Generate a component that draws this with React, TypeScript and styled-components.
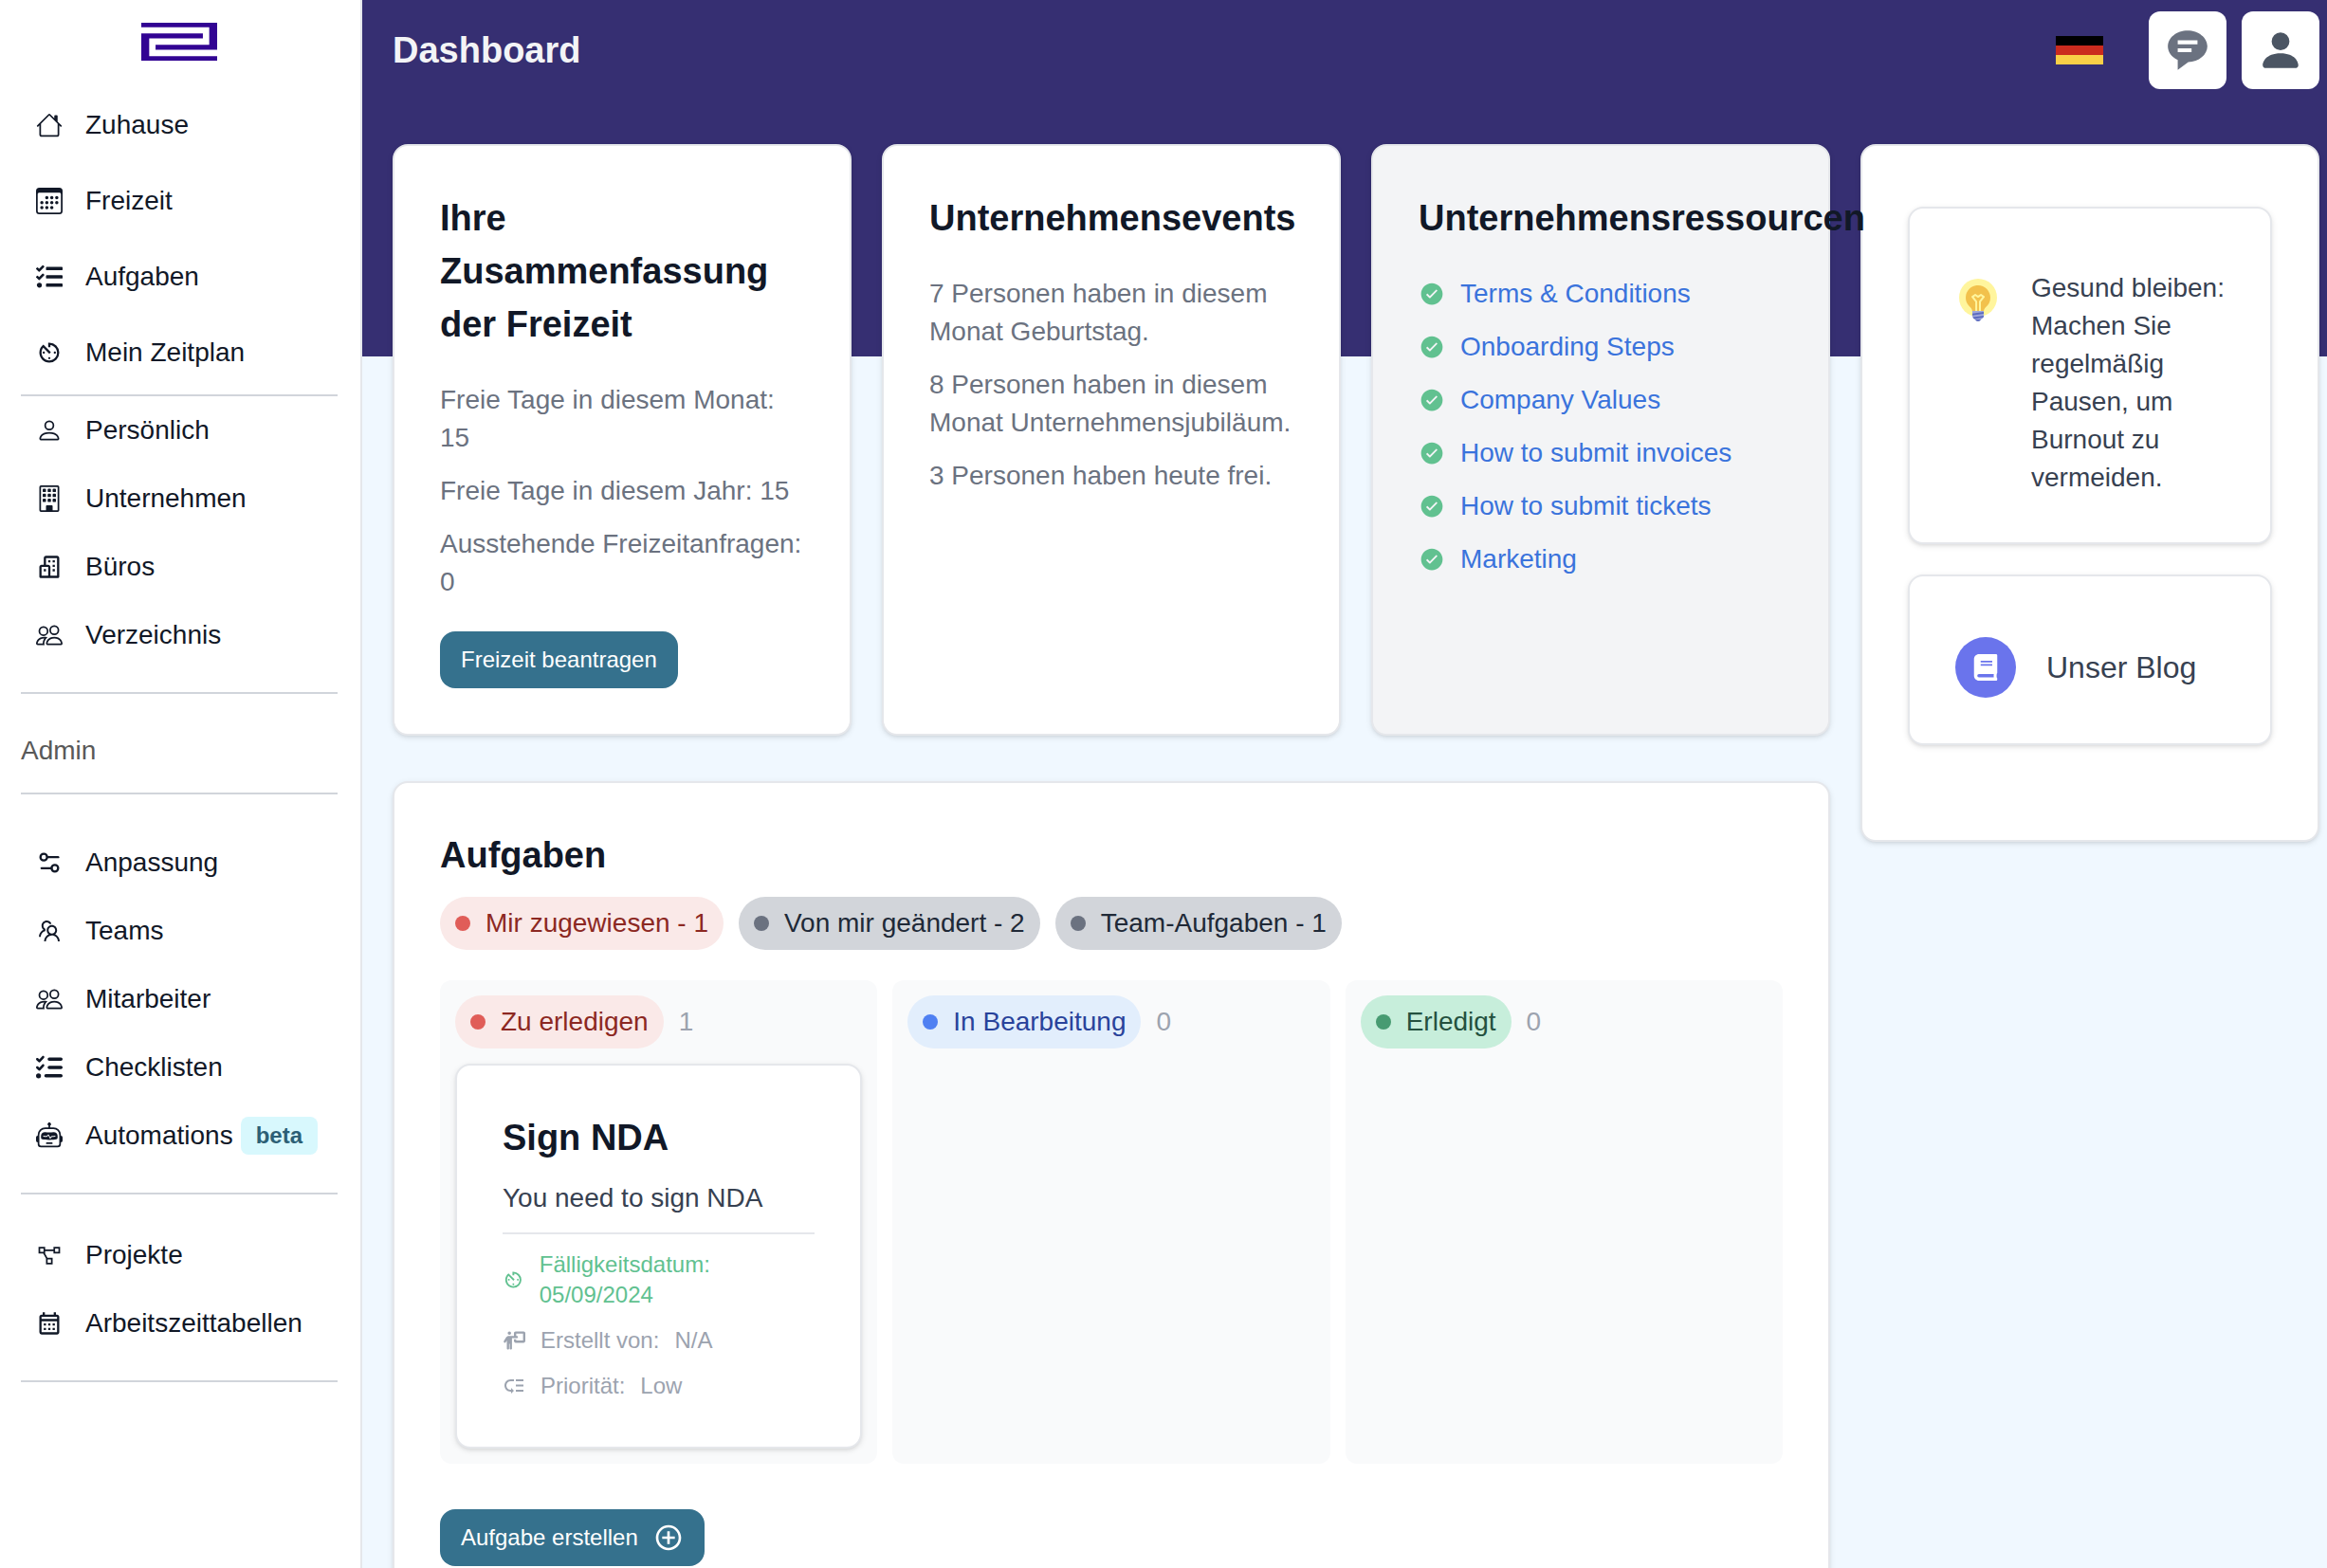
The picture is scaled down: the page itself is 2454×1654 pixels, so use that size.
import React from "react";
import styled, { createGlobalStyle } from "styled-components";
import {
  BsBuilding,
  BsCalendar3,
  BsHouse,
  BsPeople,
  BsPerson,
  BsPersonFill,
  BsRobot,
} from "react-icons/bs";
import { FaBook, FaTasks } from "react-icons/fa";
import { FaListCheck, FaPersonChalkboard } from "react-icons/fa6";
import {
  MdAddCircleOutline,
  MdAvTimer,
  MdLowPriority,
  MdOutlineCalendarMonth,
} from "react-icons/md";
import { BiBuildings } from "react-icons/bi";
import { LuSettings2 } from "react-icons/lu";
import { AiOutlineTeam } from "react-icons/ai";
import { LiaProjectDiagramSolid } from "react-icons/lia";
import { IoIosCheckmarkCircle } from "react-icons/io";
import { FcIdea } from "react-icons/fc";
import type { IconType } from "react-icons";

const color = {
  ink: "#111827",
  body: "#374151",
  muted: "#6b7280",
  faint: "#9ca3af",
  line: "#e5e7eb",
  rule: "#d1d5db",
  band: "#362f72",
  page: "#f0f8ff",
  teal: "#35718d",
  green: "#61c190",
  link: "#3a73dc",
};

const GlobalStyle = createGlobalStyle`
  *, *::before, *::after { box-sizing: border-box; }
  body {
    margin: 0;
    font-family: "Liberation Sans", Arial, Helvetica, sans-serif;
    font-size: 28px;
    line-height: 40px;
    color: ${color.ink};
  }
  h1, h2, h3, p, ul { margin: 0; padding: 0; }
  ul { list-style: none; }
  button { font: inherit; border: 0; cursor: pointer; }
  a { color: inherit; text-decoration: none; }
  svg { display: block; }
`;

/* ---------- Shell ---------- */

const Shell = styled.div`
  display: flex;
  height: 100vh;
`;

const Sidebar = styled.aside`
  flex: 0 0 382px;
  overflow-y: auto;
  scrollbar-width: none;
  padding: 24px 24px 24px 22px;
  background: #fff;
  border-right: 2px solid ${color.line};
`;

const LogoLink = styled.a`
  display: flex;
  justify-content: center;
  margin-bottom: 32px;
`;

const NavList = styled.ul<{ $gap?: number; $top?: number; $bottom?: number }>`
  display: flex;
  flex-direction: column;
  gap: ${(p) => p.$gap ?? 0}px;
  padding-top: ${(p) => p.$top ?? 0}px;
  padding-bottom: ${(p) => p.$bottom ?? 0}px;
  border-bottom: 2px solid ${color.rule};
`;

const NavLink = styled.a`
  display: flex;
  align-items: center;
  padding: 16px;
  white-space: nowrap;

  svg {
    flex: none;
    margin-right: 24px;
  }
`;

const BetaBadge = styled.span`
  margin-left: 8px;
  padding: 0 16px;
  border-radius: 8px;
  background: #d8f8fd;
  color: #2c5f75;
  font-size: 24px;
  font-weight: 700;
`;

const NavHeading = styled.h2`
  padding: 40px 0 24px;
  border-bottom: 2px solid ${color.rule};
  color: #595959;
  font-size: 28px;
  font-weight: 400;
  line-height: 40px;
`;

const Main = styled.main`
  flex: 1;
  min-width: 0;
  overflow-y: auto;
  scrollbar-width: none;
  padding: 12px 8px 48px 32px;
  background: linear-gradient(${color.band} 376px, ${color.page} 376px);
`;

const TopBar = styled.header`
  display: flex;
  align-items: center;
  gap: 16px;
  margin-bottom: 58px;
`;

const PageTitle = styled.h1`
  margin-right: auto;
  color: #f3f4f6;
  font-size: 38px;
  font-weight: 700;
  line-height: 56px;
`;

const LanguageButton = styled.button`
  margin-right: 32px;
  padding: 0;
  background: none;
`;

const IconButton = styled.button`
  display: grid;
  place-items: center;
  width: 82px;
  height: 82px;
  padding: 0;
  border-radius: 12px;
  background: #fff;
  color: ${color.muted};
`;

/* ---------- Dashboard grid ---------- */

const Dashboard = styled.div`
  display: grid;
  grid-template-columns: repeat(4, minmax(0, 1fr));
  align-items: start;
  gap: 32px;
`;

const Primary = styled.div`
  position: relative;
  z-index: 1;
  grid-column: span 3;
  display: grid;
  gap: 48px;
`;

const Summaries = styled.div`
  display: grid;
  grid-template-columns: repeat(3, minmax(0, 1fr));
  gap: 32px;
`;

const Card = styled.section<{ $tinted?: boolean }>`
  padding: 48px;
  border: 2px solid ${color.line};
  border-radius: 16px;
  background: ${(p) => (p.$tinted ? "#f3f4f6" : "#fff")};
  box-shadow: 0 2px 6px rgba(0, 0, 0, 0.1), 0 2px 4px -2px rgba(0, 0, 0, 0.1);
`;

const CardTitle = styled.h2`
  font-size: 38px;
  font-weight: 700;
  line-height: 56px;
`;

const CardBody = styled.div`
  display: grid;
  gap: 16px;
  margin: 32px 0;
  color: ${color.muted};

  &:last-child {
    margin-bottom: 0;
  }
`;

const PrimaryButton = styled.button`
  display: inline-flex;
  align-items: center;
  gap: 16px;
  height: 60px;
  padding: 0 22px;
  border-radius: 16px;
  background: ${color.teal};
  color: #fff;
  font-size: 24px;
  white-space: nowrap;
`;

const ResourceItem = styled.li`
  display: flex;
  align-items: center;
  gap: 16px;

  svg {
    flex: none;
    color: ${color.green};
  }

  a {
    color: ${color.link};
  }
`;

const ResourceList = styled.ul`
  display: grid;
  gap: 16px;
  margin-top: 32px;
`;

/* ---------- Tips column ---------- */

const TipStack = styled.div`
  display: grid;
  gap: 32px;
  padding: 16px 0 52px;
`;

const TipCard = styled(Card)`
  display: flex;
  align-items: flex-start;
  gap: 32px;
  padding-top: 64px;
  color: ${color.body};
`;

const TipIcon = styled.span`
  flex: none;
  padding-top: 8px;

  path[fill="#FBC02D"] {
    fill: #f2c14c;
  }
`;

const BlogLink = styled.a`
  display: flex;
  align-items: center;
  gap: 32px;
  font-size: 32px;
`;

const BlogIcon = styled.span`
  display: grid;
  place-items: center;
  width: 64px;
  height: 64px;
  border-radius: 50%;
  background: #6a74ec;
  color: #fff;
`;

/* ---------- Tasks ---------- */

type Tone = "red" | "gray" | "blue" | "green";

const tones: Record<Tone, { bg: string; fg: string; dot: string }> = {
  red: { bg: "#fae9e8", fg: "#8c2822", dot: "#e05d58" },
  gray: { bg: "#d2d5da", fg: "#202937", dot: "#6b7280" },
  blue: { bg: "#e2eefc", fg: "#29439b", dot: "#4f80f2" },
  green: { bg: "#c7eedb", fg: "#24513f", dot: "#489b72" },
};

const Pill = styled.span<{ $tone: Tone }>`
  display: inline-flex;
  align-items: center;
  gap: 16px;
  height: 56px;
  padding: 0 16px;
  border-radius: 28px;
  background: ${(p) => tones[p.$tone].bg};
  color: ${(p) => tones[p.$tone].fg};
  white-space: nowrap;

  &::before {
    content: "";
    width: 16px;
    height: 16px;
    border-radius: 50%;
    background: ${(p) => tones[p.$tone].dot};
  }
`;

const FilterRow = styled.div`
  display: flex;
  flex-wrap: wrap;
  gap: 16px;
  margin: 16px 0 32px;
`;

const Board = styled.div`
  display: grid;
  grid-template-columns: repeat(3, minmax(0, 1fr));
  gap: 16px;
  margin-bottom: 48px;
`;

const Column = styled.section`
  display: flex;
  flex-direction: column;
  gap: 16px;
  padding: 16px;
  border-radius: 12px;
  background: #f9fafb;
`;

const ColumnHead = styled.header`
  display: flex;
  align-items: center;
  gap: 16px;
  color: ${color.faint};
`;

const TaskText = styled.p`
  padding: 16px 0;
  border-bottom: 2px solid ${color.line};
  color: ${color.body};
`;

const TaskMeta = styled.ul`
  display: grid;
  gap: 16px;
  padding-top: 16px;
`;

const MetaRow = styled.li<{ $due?: boolean }>`
  display: flex;
  align-items: center;
  gap: 16px;
  color: ${(p) => (p.$due ? color.green : color.faint)};
  font-size: 24px;
  line-height: 32px;
`;

/* ---------- Drawings ---------- */

const Logo = () => (
  <svg width="80" height="40" viewBox="0 0 80 40" aria-label="Logo" role="img">
    <rect width="80" height="40" fill="#320493" />
    <path
      d="M0 8H68.3V19.8H11.7V31.8H80"
      fill="none"
      stroke="#fff"
      strokeWidth="6.7"
    />
  </svg>
);

const GermanFlag = () => (
  <svg width="50" height="30" viewBox="0 0 50 30" aria-hidden="true">
    <rect width="50" height="10" fill="#000" />
    <rect y="10" width="50" height="10" fill="#cb2b1e" />
    <rect y="20" width="50" height="10" fill="#f9cf47" />
  </svg>
);

const MessageIcon = () => (
  <svg
    width="50"
    height="50"
    viewBox="0 0 24 24"
    fill="currentColor"
    aria-hidden="true"
  >
    <path
      fillRule="evenodd"
      d="M12 2C6.486 2 2 5.589 2 10c0 2.908 1.898 5.515 5 6.934V22l5.34-4.005C17.697 17.852 22 14.32 22 10c0-4.411-4.486-8-10-8zM7 7h10v2H7V7zm0 4h7v2H7v-2z"
    />
  </svg>
);

/* ---------- Data ---------- */

type NavEntry = { icon: IconType; label: string; beta?: boolean };

const homeNav: NavEntry[] = [
  { icon: BsHouse, label: "Zuhause" },
  { icon: BsCalendar3, label: "Freizeit" },
  { icon: FaTasks, label: "Aufgaben" },
  { icon: MdAvTimer, label: "Mein Zeitplan" },
];

const companyNav: NavEntry[] = [
  { icon: BsPerson, label: "Persönlich" },
  { icon: BsBuilding, label: "Unternehmen" },
  { icon: BiBuildings, label: "Büros" },
  { icon: BsPeople, label: "Verzeichnis" },
];

const adminNav: NavEntry[] = [
  { icon: LuSettings2, label: "Anpassung" },
  { icon: AiOutlineTeam, label: "Teams" },
  { icon: BsPeople, label: "Mitarbeiter" },
  { icon: FaListCheck, label: "Checklisten" },
  { icon: BsRobot, label: "Automations", beta: true },
];

const projectNav: NavEntry[] = [
  { icon: LiaProjectDiagramSolid, label: "Projekte" },
  { icon: MdOutlineCalendarMonth, label: "Arbeitszeittabellen" },
];

const resources = [
  "Terms & Conditions",
  "Onboarding Steps",
  "Company Values",
  "How to submit invoices",
  "How to submit tickets",
  "Marketing",
];

const filters: { label: string; tone: Tone }[] = [
  { label: "Mir zugewiesen - 1", tone: "red" },
  { label: "Von mir geändert - 2", tone: "gray" },
  { label: "Team-Aufgaben - 1", tone: "gray" },
];

type Task = {
  title: string;
  text: string;
  due: string;
  author: string;
  priority: string;
};

const columns: { label: string; tone: Tone; tasks: Task[] }[] = [
  {
    label: "Zu erledigen",
    tone: "red",
    tasks: [
      {
        title: "Sign NDA",
        text: "You need to sign NDA",
        due: "05/09/2024",
        author: "N/A",
        priority: "Low",
      },
    ],
  },
  { label: "In Bearbeitung", tone: "blue", tasks: [] },
  { label: "Erledigt", tone: "green", tasks: [] },
];

/* ---------- Parts ---------- */

const NavItems = ({ entries }: { entries: NavEntry[] }) => (
  <>
    {entries.map(({ icon: Icon, label, beta }) => (
      <li key={label}>
        <NavLink href="#">
          <Icon size={28} aria-hidden="true" />
          {label}
          {beta && <BetaBadge>beta</BetaBadge>}
        </NavLink>
      </li>
    ))}
  </>
);

const TaskCard = ({ task }: { task: Task }) => (
  <Card as="article">
    <CardTitle as="h3">{task.title}</CardTitle>
    <TaskText>{task.text}</TaskText>
    <TaskMeta>
      <MetaRow $due>
        <MdAvTimer size={24} aria-hidden="true" />
        <span>Fälligkeitsdatum: {task.due}</span>
      </MetaRow>
      <MetaRow>
        <FaPersonChalkboard size={24} aria-hidden="true" />
        <span>Erstellt von:</span>
        <span>{task.author}</span>
      </MetaRow>
      <MetaRow>
        <MdLowPriority size={24} aria-hidden="true" />
        <span>Priorität:</span>
        <span>{task.priority}</span>
      </MetaRow>
    </TaskMeta>
  </Card>
);

export default function App() {
  return (
    <>
      <GlobalStyle />
      <Shell>
        <Sidebar>
          <LogoLink href="#">
            <Logo />
          </LogoLink>
          <nav>
            <NavList $gap={8} $bottom={8}>
              <NavItems entries={homeNav} />
            </NavList>
            <NavList $bottom={24}>
              <NavItems entries={companyNav} />
            </NavList>
            <NavHeading>Admin</NavHeading>
            <NavList $top={36} $bottom={24}>
              <NavItems entries={adminNav} />
            </NavList>
            <NavList $top={28} $bottom={24}>
              <NavItems entries={projectNav} />
            </NavList>
          </nav>
        </Sidebar>

        <Main>
          <TopBar>
            <PageTitle>Dashboard</PageTitle>
            <LanguageButton aria-label="Sprache">
              <GermanFlag />
            </LanguageButton>
            <IconButton aria-label="Nachrichten">
              <MessageIcon />
            </IconButton>
            <IconButton aria-label="Profil">
              <BsPersonFill size={50} color="#4b5563" />
            </IconButton>
          </TopBar>

          <Dashboard>
            <Primary>
              <Summaries>
                <Card>
                  <CardTitle>Ihre Zusammenfassung der Freizeit</CardTitle>
                  <CardBody>
                    <p>Freie Tage in diesem Monat: 15</p>
                    <p>Freie Tage in diesem Jahr: 15</p>
                    <p>Ausstehende Freizeitanfragen: 0</p>
                  </CardBody>
                  <PrimaryButton>Freizeit beantragen</PrimaryButton>
                </Card>
                <Card>
                  <CardTitle>Unternehmensevents</CardTitle>
                  <CardBody>
                    <p>7 Personen haben in diesem Monat Geburtstag.</p>
                    <p>8 Personen haben in diesem Monat Unternehmensjubiläum.</p>
                    <p>3 Personen haben heute frei.</p>
                  </CardBody>
                </Card>
                <Card $tinted>
                  <CardTitle>Unternehmensressourcen</CardTitle>
                  <ResourceList>
                    {resources.map((name) => (
                      <ResourceItem key={name}>
                        <IoIosCheckmarkCircle size={28} aria-hidden="true" />
                        <a href="#">{name}</a>
                      </ResourceItem>
                    ))}
                  </ResourceList>
                </Card>
              </Summaries>

              <Card>
                <CardTitle>Aufgaben</CardTitle>
                <FilterRow>
                  {filters.map((f) => (
                    <Pill as="button" key={f.label} $tone={f.tone}>
                      {f.label}
                    </Pill>
                  ))}
                </FilterRow>
                <Board>
                  {columns.map((c) => (
                    <Column key={c.label}>
                      <ColumnHead>
                        <Pill $tone={c.tone}>{c.label}</Pill>
                        <span>{c.tasks.length}</span>
                      </ColumnHead>
                      {c.tasks.map((t) => (
                        <TaskCard key={t.title} task={t} />
                      ))}
                    </Column>
                  ))}
                </Board>
                <PrimaryButton>
                  Aufgabe erstellen
                  <MdAddCircleOutline size={32} aria-hidden="true" />
                </PrimaryButton>
              </Card>
            </Primary>

            <Card as="aside">
              <TipStack>
                <TipCard>
                  <TipIcon>
                    <FcIdea size={48} aria-hidden="true" />
                  </TipIcon>
                  <p>
                    Gesund bleiben: Machen Sie regelmäßig Pausen, um Burnout zu
                    vermeiden.
                  </p>
                </TipCard>
                <TipCard>
                  <BlogLink href="#">
                    <BlogIcon>
                      <FaBook size={28} aria-hidden="true" />
                    </BlogIcon>
                    Unser Blog
                  </BlogLink>
                </TipCard>
              </TipStack>
            </Card>
          </Dashboard>
        </Main>
      </Shell>
    </>
  );
}
